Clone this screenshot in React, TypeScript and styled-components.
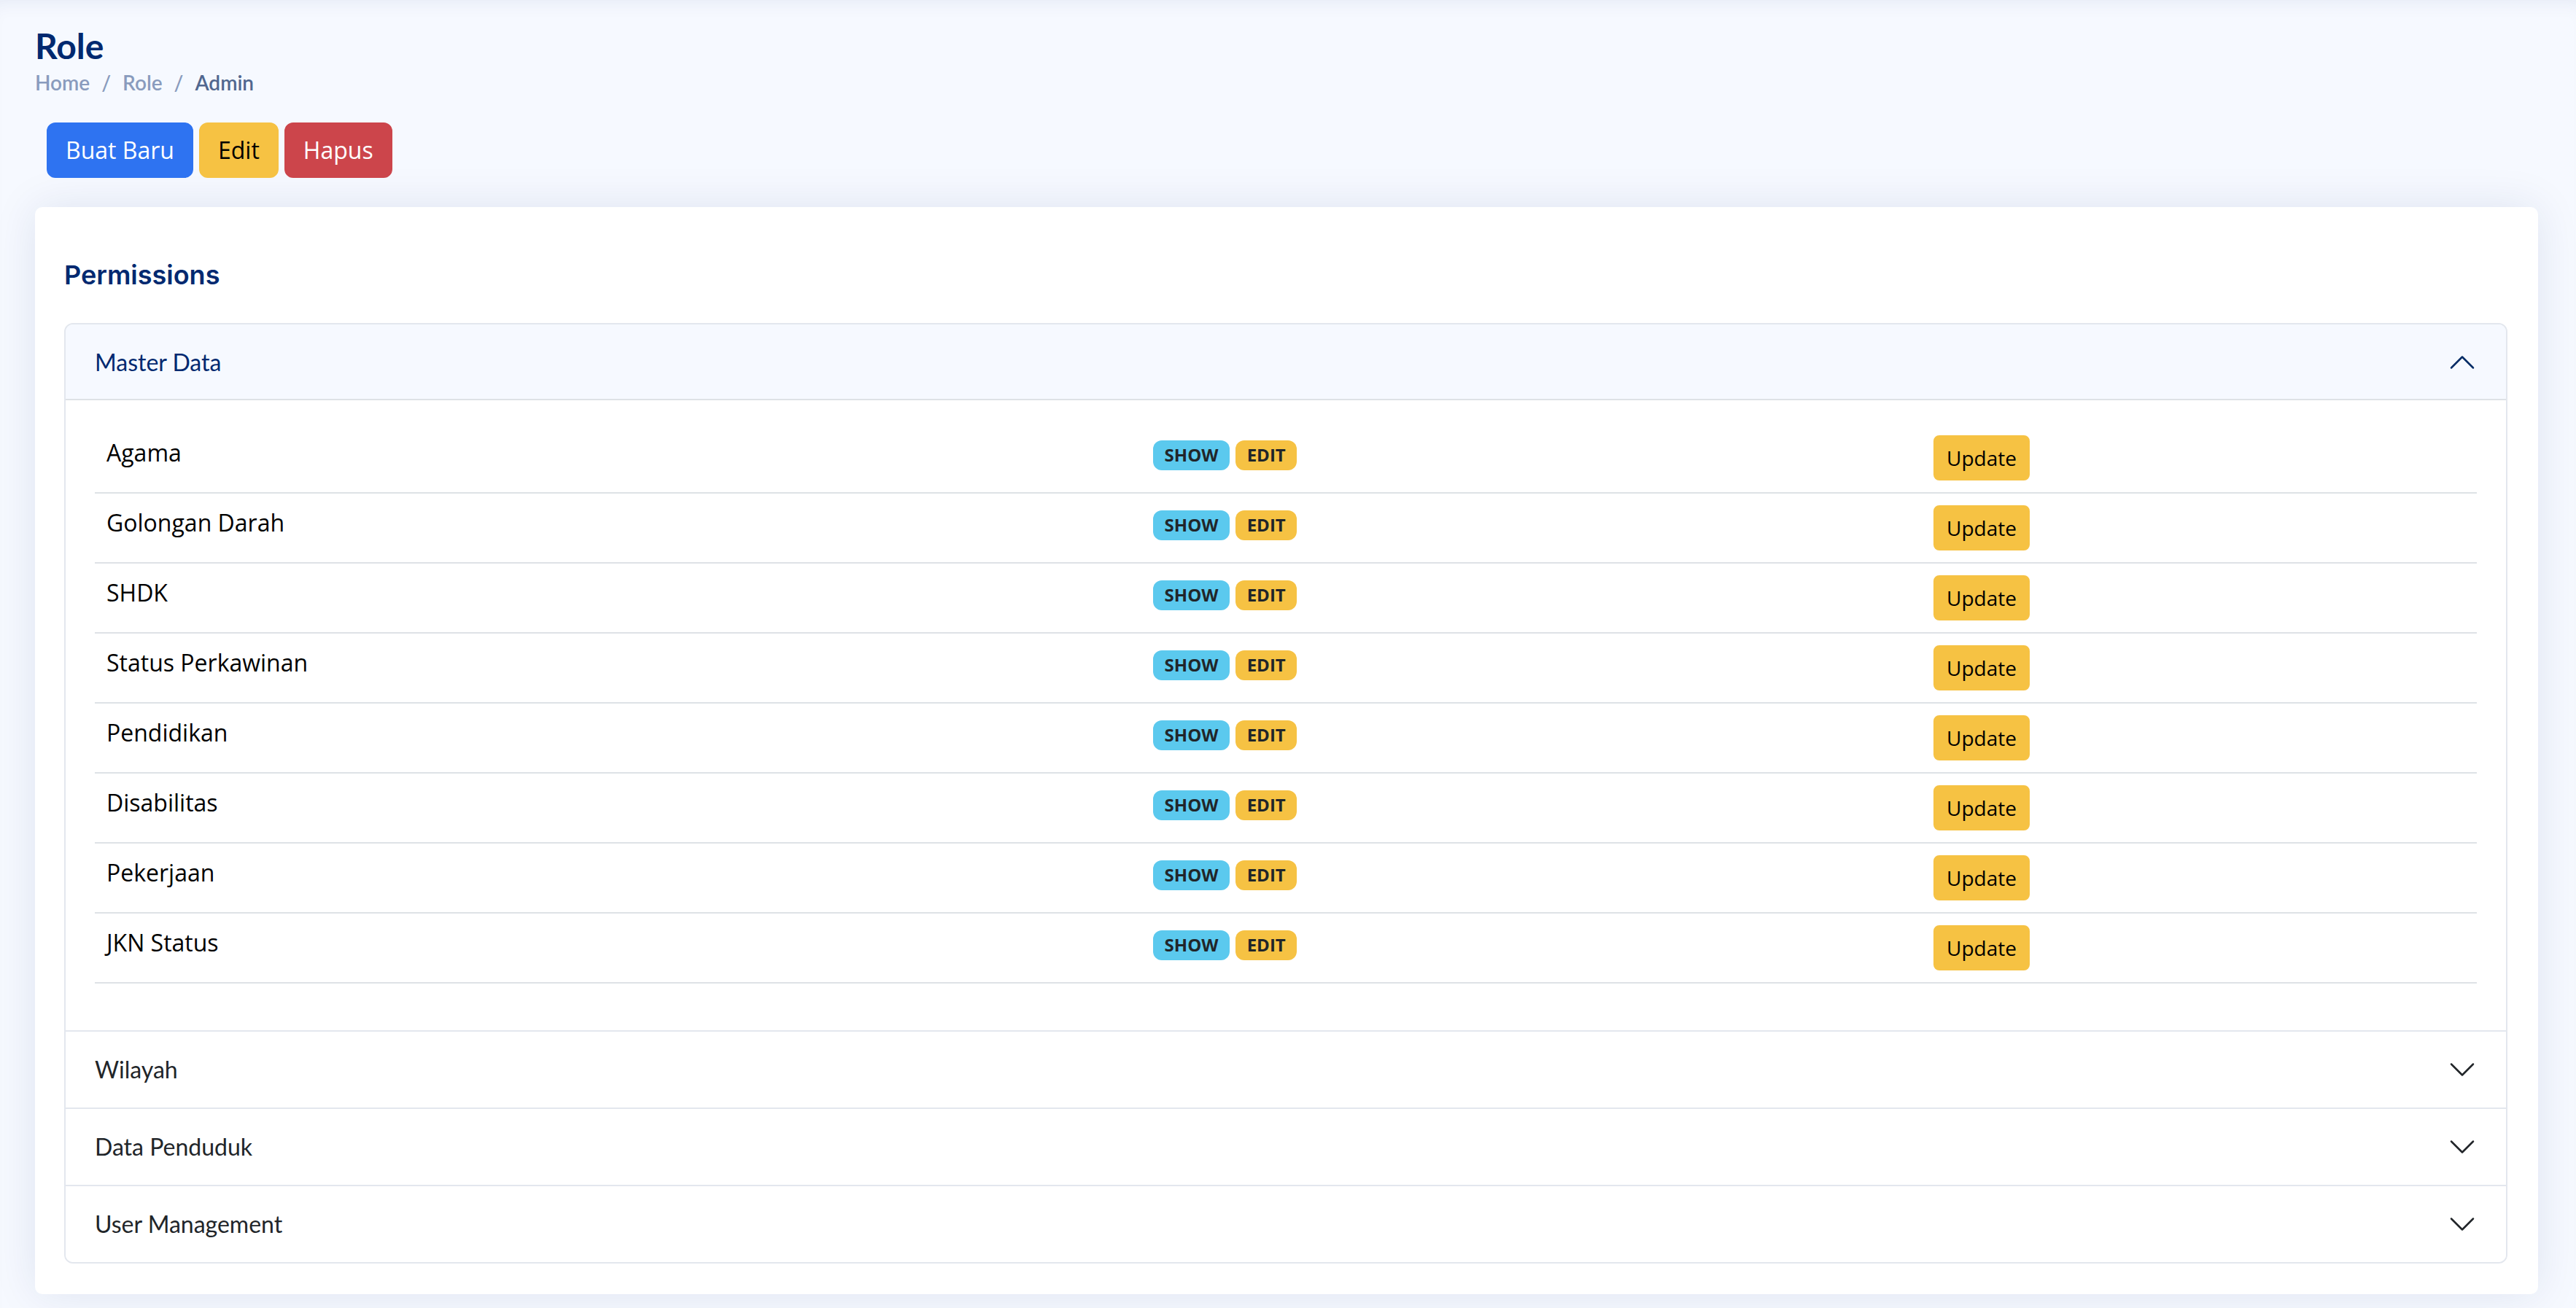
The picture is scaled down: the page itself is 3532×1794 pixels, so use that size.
import React from "react";
import styled, { createGlobalStyle } from "styled-components";

const u = (n: number) => `${n * 2}px`;

const GlobalStyle = createGlobalStyle`
  html, body { margin: 0; padding: 0; }
  * { box-sizing: border-box; }
  body {
    background: #f6f9ff;
    font-family: "Open Sans", "Liberation Sans", sans-serif;
    color: #212529;
  }
`;

const Main = styled.main`
  min-height: 100vh;
  padding: ${u(17)} ${u(26)} ${u(10)} ${u(24)};
  box-shadow: inset 0 ${u(10)} ${u(14)} -${u(10)} rgba(1, 41, 112, 0.09);
`;

const PageTitle = styled.div`
  margin-bottom: ${u(17)};
`;

const Title = styled.h1`
  margin: 0;
  font-family: Lato, "Noto Sans", sans-serif;
  font-size: ${u(24)};
  line-height: ${u(28.8)};
  font-weight: 700;
  color: #012970;
`;

const Crumbs = styled.ol`
  list-style: none;
  margin: 0;
  padding: 0;
  display: flex;
  font-family: Lato, "Noto Sans", sans-serif;
  font-size: ${u(14)};
  line-height: ${u(21)};
  font-weight: 600;
`;

const Crumb = styled.li<{ $active?: boolean }>`
  color: ${(p) => (p.$active ? "#51678f" : "#899bbd")};
  &:not(:first-child)::before {
    content: "/";
    padding: 0 ${u(8)};
    color: #899bbd;
  }
`;

const Toolbar = styled.div`
  display: flex;
  gap: ${u(4)};
  padding-left: ${u(8)};
  margin-bottom: ${u(20)};
`;

const tones = {
  primary: { bg: "#2e73f1", fg: "#ffffff" },
  warning: { bg: "#f6c243", fg: "#000000" },
  danger: { bg: "#cc454b", fg: "#ffffff" },
  info: { bg: "#5bc9ee", fg: "#212529" },
};
type Tone = keyof typeof tones;

const Button = styled.button<{ $tone: Tone }>`
  font-family: "Open Sans", "Liberation Sans", sans-serif;
  font-size: ${u(16)};
  line-height: ${u(24)};
  font-weight: 400;
  padding: ${u(6)} ${u(12)};
  border: ${u(1)} solid ${(p) => tones[p.$tone].bg};
  border-radius: ${u(6)};
  background: ${(p) => tones[p.$tone].bg};
  color: ${(p) => tones[p.$tone].fg};
  cursor: pointer;
`;

const SmallButton = styled(Button)`
  font-size: ${u(14)};
  line-height: ${u(21)};
  padding: ${u(4)} ${u(8)};
  border-radius: ${u(4)};
`;

const Card = styled.section`
  background: #ffffff;
  border-radius: ${u(5)};
  box-shadow: 0 0 ${u(30)} rgba(1, 41, 112, 0.1);
  padding: ${u(16)} ${u(21)} ${u(21)} ${u(20)};
`;

const CardTitle = styled.h5`
  margin: 0 0 ${u(7)};
  padding: ${u(20)} 0 ${u(15)};
  font-family: Inter, "Noto Sans", sans-serif;
  font-size: ${u(18)};
  line-height: ${u(21.6)};
  font-weight: 600;
  color: #012970;
`;

const Accordion = styled.div`
  border: ${u(1)} solid #e3e7ee;
  border-radius: ${u(6)};
  overflow: hidden;
`;

const Item = styled.div`
  & + & {
    border-top: ${u(1)} solid #e3e7ee;
  }
`;

const Header = styled.button<{ $open: boolean }>`
  width: 100%;
  display: flex;
  align-items: center;
  justify-content: space-between;
  padding: ${u(14)} ${u(20)};
  border: 0;
  margin: 0;
  background: ${(p) => (p.$open ? "#f6f9ff" : "#ffffff")};
  color: ${(p) => (p.$open ? "#012970" : "#212529")};
  box-shadow: ${(p) => (p.$open ? `inset 0 -${u(1)} 0 #dee2e6` : "none")};
  font-family: Lato, "Noto Sans", sans-serif;
  font-size: ${u(16)};
  line-height: ${u(24)};
  font-weight: 400;
  text-align: left;
  cursor: pointer;
`;

const Chevron = styled.svg<{ $open: boolean }>`
  width: ${u(20)};
  height: ${u(20)};
  flex-shrink: 0;
  fill: none;
  stroke: ${(p) => (p.$open ? "#052c65" : "#212529")};
  stroke-width: 1;
  stroke-linecap: round;
  stroke-linejoin: round;
  transform: ${(p) => (p.$open ? "rotate(-180deg)" : "none")};
`;

const Body = styled.div`
  padding: ${u(16)} ${u(20)};
`;

const Table = styled.div`
  margin-bottom: ${u(16)};
`;

const Row = styled.div`
  display: grid;
  grid-template-columns: ${u(717.5)} ${u(535)} 1fr;
  border-bottom: ${u(1)} solid #dee2e6;
`;

const Cell = styled.div`
  padding: ${u(8)};
`;

const NameCell = styled(Cell)`
  font-size: ${u(16)};
  line-height: ${u(24)};
  color: #000000;
`;

const BadgeCell = styled(Cell)`
  display: flex;
  align-items: flex-start;
  gap: ${u(4)};
  padding-top: ${u(11.5)};
`;

const Badge = styled.span<{ $tone: Tone }>`
  display: inline-block;
  font-family: "Open Sans", "Liberation Sans", sans-serif;
  font-weight: 700;
  font-size: ${u(12)};
  line-height: 1;
  padding: ${u(4.2)} ${u(7.8)};
  border-radius: ${u(6)};
  background: ${(p) => tones[p.$tone].bg};
  color: #212529;
`;

const permissions = [
  "Agama",
  "Golongan Darah",
  "SHDK",
  "Status Perkawinan",
  "Pendidikan",
  "Disabilitas",
  "Pekerjaan",
  "JKN Status",
];

const groups = [
  { title: "Master Data", open: true },
  { title: "Wilayah", open: false },
  { title: "Data Penduduk", open: false },
  { title: "User Management", open: false },
];

export default function App() {
  return (
    <>
      <GlobalStyle />
      <Main>
        <PageTitle>
          <Title>Role</Title>
          <nav>
            <Crumbs>
              <Crumb>Home</Crumb>
              <Crumb>Role</Crumb>
              <Crumb $active>Admin</Crumb>
            </Crumbs>
          </nav>
        </PageTitle>
        <Toolbar>
          <Button $tone="primary">Buat Baru</Button>
          <Button $tone="warning">Edit</Button>
          <Button $tone="danger">Hapus</Button>
        </Toolbar>
        <Card>
          <CardTitle>Permissions</CardTitle>
          <Accordion>
            {groups.map((g) => (
              <Item key={g.title}>
                <Header $open={g.open}>
                  <span>{g.title}</span>
                  <Chevron $open={g.open} viewBox="0 0 16 16">
                    <path d="M2 5L8 11L14 5" />
                  </Chevron>
                </Header>
                {g.open && (
                  <Body>
                    <Table>
                      {permissions.map((name) => (
                        <Row key={name}>
                          <NameCell>{name}</NameCell>
                          <BadgeCell>
                            <Badge $tone="info">SHOW</Badge>
                            <Badge $tone="warning">EDIT</Badge>
                          </BadgeCell>
                          <Cell>
                            <SmallButton $tone="warning">Update</SmallButton>
                          </Cell>
                        </Row>
                      ))}
                    </Table>
                  </Body>
                )}
              </Item>
            ))}
          </Accordion>
        </Card>
      </Main>
    </>
  );
}
